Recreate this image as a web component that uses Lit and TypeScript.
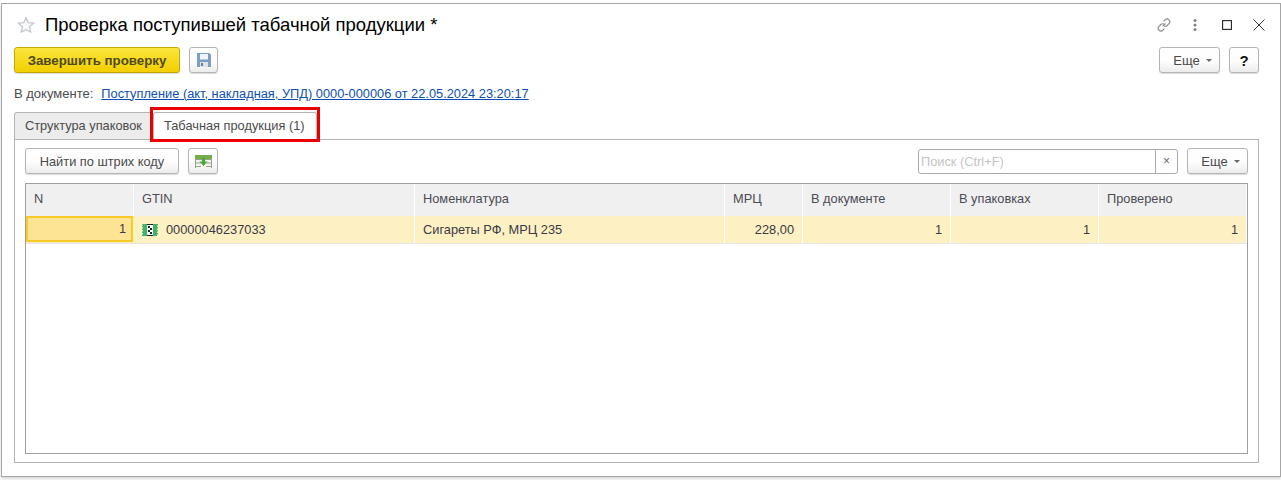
import { LitElement, html, css } from "lit";
import { customElement } from "lit/decorators.js";

@customElement("app-root")
export class AppRoot extends LitElement {
  static styles = css`
    :host { display: block; width: 1281px; height: 480px; background: #fff; overflow: hidden; font: 12.8px "Liberation Sans", Arial, sans-serif; color: #4b4b4b; }
    .page { padding: 3px 0 0 1px; height: 480px; box-sizing: border-box; }
    .win { width: 1280px; height: 474px; box-sizing: border-box; border: 1px solid #a6a6a6; background: #fff; box-shadow: 0 2px 3px rgba(0,0,0,.16); padding: 0 21px 0 12px; display: flex; flex-direction: column; position: relative; }
    .title { height: 43px; box-sizing: border-box; padding-bottom: 2px; display: flex; align-items: center; }
    .star { margin: 0 10px 0 3px; display: block; }
    h1 { margin: 0; font-size: 18.5px; font-weight: 400; color: #000; flex: 1; white-space: nowrap; }
    .wctl { display: flex; align-items: center; margin-right: -6px; }
    .wctl svg { display: block; }
    .bar { display: flex; align-items: center; height: 26px; gap: 9px; }
    .spacer { flex: 1; }
    .btn { box-sizing: border-box; height: 26px; border: 1px solid #b4b4b4; border-radius: 3px; background: linear-gradient(#fff 0%, #fdfdfd 55%, #ececec 100%); box-shadow: 0 1px 1px rgba(0,0,0,.14); display: flex; align-items: center; justify-content: center; color: #4a4a4a; font: inherit; padding: 0; }
    .primary { width: 166px; background: linear-gradient(#fbe53d, #f3cf00); border-color: #c2a900; color: #4f4a1d; font-weight: 700; font-size: 13.3px; }
    .icon { width: 29px; }
    .more { width: 61px; gap: 6px; padding-left: 6px; font-size: 13px; }
    .caret { width: 0; height: 0; border: 3px solid transparent; border-top: 3px solid #666; border-bottom: 0; }
    .help { width: 30px; color: #111; font-size: 15px; font-weight: 700; }
    .doc { height: 18px; margin-top: 11px; display: flex; align-items: center; gap: 8px; }
    .doc span { font-size: 13px; }
    .doc a { color: #0f4fb4; text-decoration: underline; font-size: 12.82px; }
    .tabs { display: flex; margin-top: 10px; height: 28px; position: relative; z-index: 1; }
    .tab { box-sizing: border-box; height: 27px; padding: 0 10px 2px; display: flex; align-items: center; border: 1px solid #b4b4b4; border-radius: 3px 3px 0 0; background: #ececec; white-space: nowrap; }
    .tab.inactive { width: 139px; border-bottom: 0; }
    .tab.active { width: 164px; height: 28px; background: #fff; border-bottom: 0; }
    .mark { position: absolute; left: 136px; top: -5px; width: 170px; height: 35px; box-sizing: border-box; border: 3px solid #ea0000; pointer-events: none; }
    .panel { width: 1245px; height: 324px; margin-top: -1px; box-sizing: border-box; border: 1px solid #b4b4b4; padding: 8px 10px 8px; display: flex; flex-direction: column; }
    .find { width: 154px; }
    .search { width: 260px; height: 25px; box-sizing: border-box; border: 1px solid #a9a9a9; border-radius: 3px; display: flex; background: #fff; }
    .search span:first-child { flex: 1; color: #c4c4c4; padding-left: 2px; line-height: 23px; }
    .clear { width: 21px; border-left: 1px solid #a9a9a9; text-align: center; line-height: 22px; color: #666; font-size: 12px; }
    .table { flex: 1; margin-top: 9px; border: 1px solid #a0a0a0; box-sizing: border-box; }
    .row { display: grid; grid-template-columns: 108px 281px 310px 78px 148px 148px 1fr; }
    .head { height: 32px; background: #f0f0f0; }
    .head div { border-right: 1px solid #fff; padding-left: 8px; line-height: 30px; color: #4c4c55; box-sizing: border-box; }
    .data { height: 27px; background: #fdf1c4; border-bottom: 1px solid #e6e6e6; box-sizing: content-box; }
    .data div { border-right: 1px solid #fff; padding: 0 8px; line-height: 27px; color: #3a3a46; box-sizing: border-box; white-space: nowrap; }
    .num { text-align: right; }
    .data .cur { background: #fde495; border: 2px solid #f9c929; line-height: 22px; width: 107px; height: 26px; padding: 0 5px 0 0; }
    .gtin { display: flex; align-items: center; gap: 8px; }
    .gtin svg { display: block; }
  `;

  render() {
    return html`<div class="page"><div class="win">
      <div class="title">
        <svg class="star" width="18" height="18" viewBox="0 0 18 18"><path d="M9 1.5l2.2 5.1 5.5.5-4.2 3.6 1.3 5.4L9 13.700l-4.800 2.400 1.300-5.400L1.300 7.100l5.500-.5z" fill="#fafafa" stroke="#c3c7cd" stroke-width="1.2"/></svg>
        <h1>Проверка поступившей табачной продукции *</h1>
        <div class="wctl">
          <svg width="16" height="16" viewBox="0 0 16 16" fill="none" stroke="#8a8a8a" stroke-width="1.1"><path d="M6.600 9.400l3-3M7.500 4.400l1.600-1.600a2.700 2.700 0 0 1 3.900 3.900l-1.800 1.800a2.700 2.700 0 0 1-3.200.4M8.500 11.600l-1.600 1.600a2.700 2.700 0 0 1-3.900-3.900l1.800-1.800a2.700 2.700 0 0 1 3.200-.4"/></svg>
          <svg style="margin-left:21px" width="4" height="14" viewBox="0 0 4 14" fill="#808080"><circle cx="2" cy="2.500" r="1.500"/><circle cx="2" cy="7" r="1.500"/><circle cx="2" cy="11.500" r="1.500"/></svg>
          <svg style="margin-left:25px" width="10" height="10" viewBox="0 0 10 10" fill="none" stroke="#222" stroke-width="1.1"><rect x=".6" y=".6" width="8.800" height="8.800"/></svg>
          <svg style="margin-left:21px" width="12" height="12" viewBox="0 0 12 12" fill="none" stroke="#333" stroke-width="1"><path d="M.5.5l11 11M11.500.5l-11 11"/></svg>
        </div>
      </div>
      <div class="bar">
        <button class="btn primary">Завершить проверку</button>
        <button class="btn icon"><svg width="14" height="14" viewBox="0 0 14 14"><path d="M0 0h12.500L14 1.500V14H0z" fill="#7c9dc4"/><rect x="3" y="1" width="8" height="5.500" fill="#f2f5f9"/><rect x="3" y="9" width="8" height="5" fill="#dfe3e8"/><rect x="4" y="10" width="2" height="3" fill="#6a7f96"/></svg></button>
        <span class="spacer"></span>
        <button class="btn more">Еще <span class="caret"></span></button>
        <button class="btn help">?</button>
      </div>
      <div class="doc"><span>В документе:</span><a href="#">Поступление (акт, накладная, УПД) 0000-000006 от 22.05.2024 23:20:17</a></div>
      <div class="tabs">
        <div class="tab inactive">Структура упаковок</div>
        <div class="tab active">Табачная продукция (1)</div>
        <div class="mark"></div>
      </div>
      <div class="panel">
        <div class="bar">
          <button class="btn find">Найти по штрих коду</button>
          <button class="btn icon" style="width:30px"><svg width="17" height="13" viewBox="0 0 17 13"><rect width="17" height="4" fill="#76ad4c"/><rect y="4" width="17" height="9" fill="#f2f6ee"/><path d="M0 4.500h17M1 8h5M11 8h5M1 11.500h5M11 11.500h5M.5 4v9M16.500 4v9" fill="none" stroke="#9aa08f"/><path d="M7 3h3v3.500h2.500L8.500 11 4.500 6.500H7z" fill="#4da53f"/></svg></button>
          <span class="spacer"></span>
          <div class="search"><span>Поиск (Ctrl+F)</span><span class="clear">×</span></div>
          <button class="btn more">Еще <span class="caret"></span></button>
        </div>
        <div class="table">
          <div class="row head"><div>N</div><div>GTIN</div><div>Номенклатура</div><div>МРЦ</div><div>В документе</div><div>В упаковках</div><div>Проверено</div></div>
          <div class="row data">
            <div class="cur num">1</div>
            <div class="gtin"><svg width="16" height="12" viewBox="0 0 16 12"><path d="M0 0h16v1.500h-1v1.500h1v1.500h-1V6h1v1.500h-1V9h1v1.500h-1V12H0v-1.500h1V9H0V7.500h1V6H0V4.500h1V3H0V1.500h1z" fill="#3db56f"/><rect x="5" y="0" width="6" height="12" fill="#fff"/><path d="M5 0h6v1H5zM6 2h2v2H6zM8 4h2v2H8zM6 6h2v2H6zM8 8h2v2H8zM5 11h6v1H5z" fill="#222"/></svg>00000046237033</div>
            <div>Сигареты РФ, МРЦ 235</div>
            <div class="num">228,00</div>
            <div class="num">1</div>
            <div class="num">1</div>
            <div class="num">1</div>
          </div>
        </div>
      </div>
    </div></div>`;
  }
}
